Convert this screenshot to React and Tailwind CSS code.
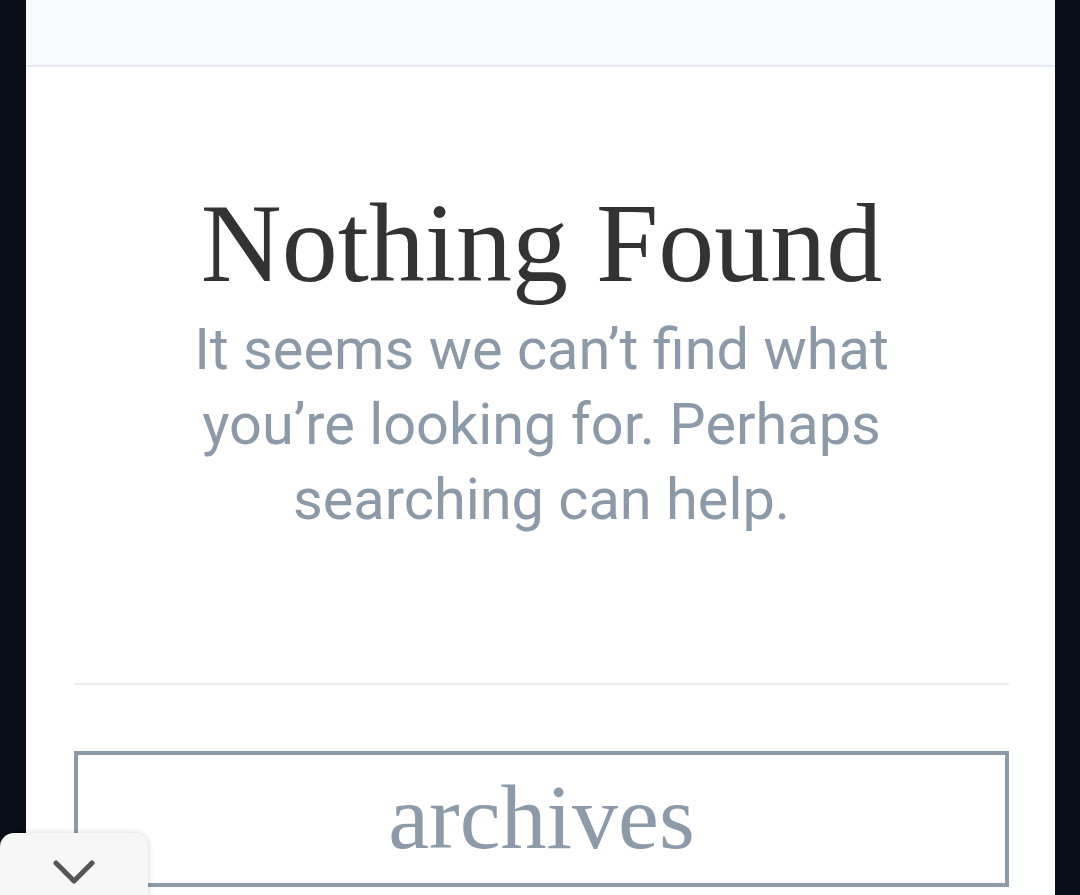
import React from "react";

const serif = { fontFamily: '"Liberation Serif", "DejaVu Serif", serif' };

const App = () => {
  return (
    <div className="min-h-[895px] w-full bg-[#090e17] pl-[26px] pr-[25px] overflow-hidden relative">
      <div className="min-h-[895px] bg-white flex flex-col">
        {/* top bar */}
        <div className="h-[67px] bg-[#f8fafc] border-b-2 border-[#e6ebf2]" />

        <main className="pl-[48px] pr-[46px] pt-[120px] flex flex-col">
          <h1
            className="text-center text-[112px] leading-none text-[#333333]"
            style={serif}
          >
            Nothing Found
          </h1>
          <p className="mt-[13px] mx-auto max-w-[760px] text-center text-[57.7px] leading-[75px] text-[#8b99a8] font-['Roboto',sans-serif]">
            It seems we can’t find what you’re looking for. Perhaps searching
            can help.
          </p>

          <hr className="mt-[146px] border-0 h-[2px] bg-[#eceef0]" />

          <div className="mt-[66px] h-[136px] border-4 border-[#8c9aa9] flex items-center justify-center">
            <span
              className="text-[92px] leading-none text-[#8c9aa9] -mt-[4px]"
              style={serif}
            >
              archives
            </span>
          </div>
        </main>
      </div>

      {/* floating collapse tab */}
      <button className="absolute left-0 top-[833px] w-[148px] h-[80px] bg-[#f7f7f7] rounded-t-[14px] shadow-[0_0_6px_rgba(0,0,0,0.18)] flex justify-center pt-[27px]">
        <svg width="42" height="27" viewBox="0 0 42 27" fill="none">
          <path
            d="M3 3 L21 21 L39 3"
            stroke="#555555"
            strokeWidth="5"
            strokeLinecap="round"
            strokeLinejoin="round"
          />
        </svg>
      </button>
    </div>
  );
};

export default App;
